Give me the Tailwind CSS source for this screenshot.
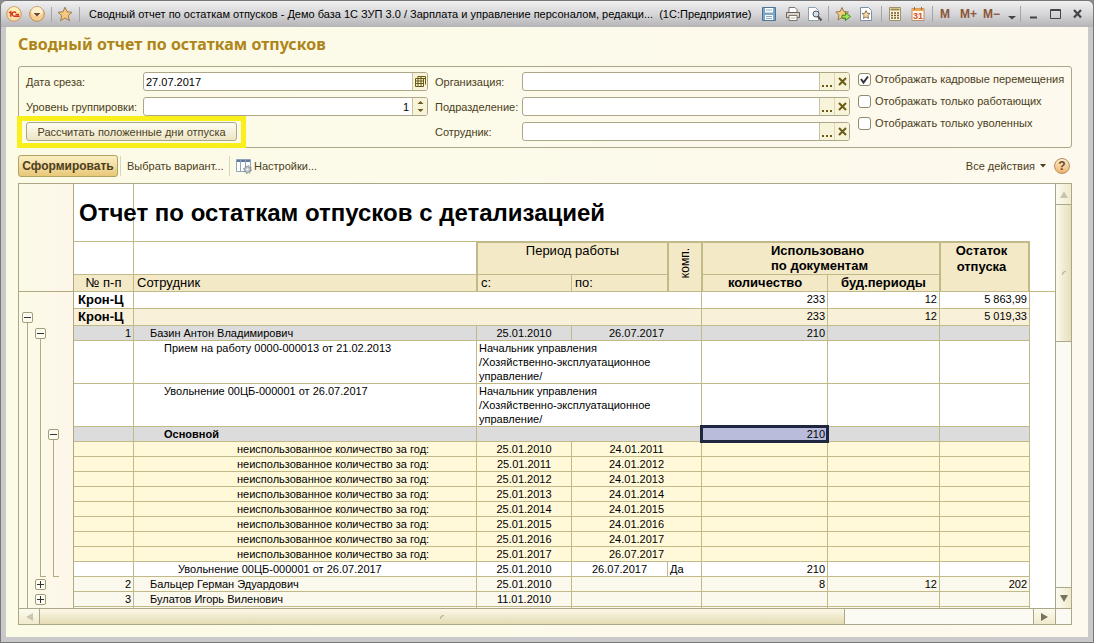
<!DOCTYPE html>
<html lang="ru">
<head>
<meta charset="utf-8">
<title>Сводный отчет по остаткам отпусков</title>
<script src="https://cdn.jsdelivr.net/npm/@tailwindcss/browser@4"></script>
</head>
<body class="h-screen overflow-hidden bg-[#8a8a8c] font-['Liberation_Sans',Arial,sans-serif] text-[11px] leading-[14px] text-[#4b4020]">
<div class="flex h-full flex-col rounded-t-md border border-[#77777a] bg-[#c9c8ca] px-[5px] pb-[5px]">

  <header class="-mx-[5px] flex h-[26px] shrink-0 items-center rounded-t-md bg-linear-to-b from-[#f0f0f1] via-[#d6d6d8] to-[#b4b4b6] pr-[11px] pl-[5px] text-black">
    <button aria-label="Главное меню" class="size-4"><svg viewBox="0 0 16 16" class="size-4"><circle cx="8" cy="8" r="7.300" fill="#fbd9a0" stroke="#c99a62"/><circle cx="8" cy="6.500" r="5.500" fill="#fff0b8"/><path d="M3 7 4.800 5.700V10.800M10 6.900A2.100 2.100 0 1 0 8.500 10.200H13.500M9.500 8.500H13" fill="none" stroke="#d8301c" stroke-width="1.400"/></svg></button>
    <button aria-label="Меню функций" class="ml-[7px] size-4"><svg viewBox="0 0 16 16" class="size-4"><circle cx="8" cy="8" r="7.300" fill="#f8cf92" stroke="#b98d58"/><ellipse cx="8" cy="5.500" rx="5.800" ry="4.500" fill="#fff1d0"/><path d="M4.500 7h7L8 10.500z" fill="#6b4a28"/></svg></button>
    <span class="ml-[6px] h-[15px] w-px bg-[#a5a5a8]"></span>
    <button aria-label="Избранное" class="ml-[5px] size-4"><svg viewBox="0 0 16 16" class="size-4"><path d="m8 1.200 2 4.600 5 .5-3.800 3.300 1.200 5L8 12l-4.400 2.600 1.200-5L1 6.300l5-.5z" fill="#f8c97c" stroke="#a07a50"/></svg></button>
    <span class="ml-[6px] h-[15px] w-px bg-[#a5a5a8]"></span>
    <h1 class="ml-[9px] min-w-0 flex-1 truncate text-[11px] whitespace-pre">Сводный отчет по остаткам отпусков - Демо база 1С ЗУП 3.0 / Зарплата и управление персоналом, редакци...  (1С:Предприятие)</h1>
    <div class="flex items-center">
      <button aria-label="Сохранить" class="size-4"><svg viewBox="0 0 16 16" class="size-4"><path d="M1.500 1.500h13v13h-13z" fill="#7da7c8" stroke="#4a7596"/><path d="M4 2h8v4.500H4zM4 9h8v5H4z" fill="#fff"/><path d="M5 10.500h6M5 12.500h6M5 4h6" stroke="#8aa9c0"/></svg></button>
      <button aria-label="Печать" class="ml-2 size-4"><svg viewBox="0 0 16 16" class="size-4"><path d="M4 6V1.500h6l2 2V6" fill="#fff" stroke="#777"/><path d="M1.500 6.500h13v5h-13z" fill="#ddd5c8" stroke="#6a625a"/><path d="M4 9.500h8v5H4z" fill="#fff" stroke="#777"/><path d="M5.500 12h5" stroke="#bb8"/></svg></button>
      <button aria-label="Предварительный просмотр" class="ml-[6px] size-4"><svg viewBox="0 0 16 16" class="size-4"><path d="M1.500 1.500h7l3 3v10h-10z" fill="#fff" stroke="#8fa0ae"/><circle cx="9" cy="8" r="3" fill="#cde0ee" stroke="#555"/><path d="m11 10.500 3.500 4" stroke="#555" stroke-width="2"/></svg></button>
      <span class="ml-[5px] h-4 w-px bg-[#a5a5a8]"></span>
      <button aria-label="Добавить в избранное" class="ml-[6px] size-4"><svg viewBox="0 0 16 16" class="size-4"><path d="m7 1.500 1.800 4 4.700.5L10 9.200l1 4.800-4-2.400L3 14l1-4.800L.8 6l4.400-.5z" fill="#f7cb82" stroke="#9b774d"/><path d="M7 9.200h3.500V6.500l5 4-5 4V12H7z" fill="#a5e05a" stroke="#3c8a1e"/></svg></button>
      <button aria-label="Список избранного" class="ml-[7px] size-4"><svg viewBox="0 0 16 16" class="size-4"><path d="M2.500 1.500h8l3 3v10h-11z" fill="#fff" stroke="#7992a6"/><path d="m8 4.500 1.200 2.700 2.800.3-2.100 2 .7 2.900L8 11l-2.600 1.400.7-2.900-2.100-2 2.800-.3z" fill="#f7dca8" stroke="#7a6040" stroke-width=".8"/></svg></button>
      <span class="ml-[7px] h-4 w-px bg-[#a5a5a8]"></span>
      <button aria-label="Калькулятор" class="ml-[5px] size-4"><svg viewBox="0 0 16 16" class="size-4"><path d="M2.500 1.500h11v13h-11z" fill="#fbf3dc" stroke="#a09070"/><path d="M3.500 3.500h9" stroke="#a28a40" stroke-width="2"/><path d="M4 7h8M4 9.500h8M4 12h8" stroke="#735c28" stroke-width="1.500" stroke-dasharray="2 1"/></svg></button>
      <button aria-label="Календарь" class="ml-[7px] size-4"><svg viewBox="0 0 16 16" class="size-4"><path d="M2 2.500h12v12H2z" fill="#fff8ea" stroke="#b4926e"/><path d="M2 2.500h12V5H2z" fill="#f0a555"/><path d="M4.500 1v3M11.500 1v3" stroke="#9a6a3a"/><text x="8" y="13" text-anchor="middle" font-size="9" font-weight="700" fill="#d8502c">31</text></svg></button>
      <span class="ml-[6px] h-4 w-px bg-[#a5a5a8]"></span>
      <button class="ml-[7px] text-[12px] font-bold text-[#8a5638]">M</button>
      <button class="ml-[10px] text-[12px] font-bold text-[#8a5638]">M+</button>
      <button class="ml-[6px] text-[12px] font-bold text-[#8a5638]">M−</button>
      <button aria-label="Ещё" class="ml-2 h-4 w-2"><svg viewBox="0 0 8 16" class="h-4 w-2"><path d="M0 10h8l-4 3.500z" fill="#444"/></svg></button>
      <span class="ml-[4px] h-4 w-px bg-[#a5a5a8]"></span>
      <button aria-label="Свернуть" class="ml-[9px] h-3 w-[7px]"><svg viewBox="0 0 7 12" class="h-3 w-[7px]"><path d="M0 9.500h7" stroke="#444" stroke-width="2"/></svg></button>
      <button aria-label="Развернуть" class="ml-[13px] h-3 w-[11px]"><svg viewBox="0 0 11 12" class="h-3 w-[11px]"><path d="M.5 1.500h10v9H.5zM0 2.500h11" fill="none" stroke="#444"/></svg></button>
      <button aria-label="Закрыть" class="ml-[12px] h-3 w-[9px]"><svg viewBox="0 0 9 12" class="h-3 w-[9px]"><path d="m1 2 7 7.500M8 2 1 9.500" stroke="#444" stroke-width="2.200"/></svg></button>
    </div>
  </header>

  <main class="flex min-h-0 flex-1 flex-col bg-linear-to-r from-[#fcfbe6] to-[#fdf9ee] pr-4 pb-3 pl-3">
    <h2 class="mt-2 h-[31px] shrink-0 font-['Noto_Sans',sans-serif] text-[16px] leading-[18px] font-bold text-[#ae8519]">Сводный отчет по остаткам отпусков</h2>

    <form class="flex h-[82px] shrink-0 rounded-[3px] border border-[#aca789] pt-[5px] pr-[7px] pl-[7px]">
      <div class="flex flex-[402] flex-col gap-[6px]">
        <div class="flex h-[19px] items-center">
          <label for="date" class="w-[117px] shrink-0">Дата среза:</label>
          <div class="flex h-full min-w-0 flex-1 overflow-hidden rounded-[3px] border border-[#aca789] bg-white">
            <input id="date" value="27.07.2017" class="min-w-0 flex-1 px-[2px] text-black outline-none">
            <button type="button" aria-label="Выбрать дату" class="flex w-[15px] items-center justify-center border-l border-[#c9c3a0] bg-[#f8f4da]"><svg viewBox="0 0 11 11" class="size-[11px]"><path d="M2.500.5h8v8M2 2.500h8M.5 2.500h8v8h-8zM.5 5h8M.5 7.500h8M3 1v9.500M6 1v9.500" fill="none" stroke="#6b5a14"/></svg></button>
          </div>
        </div>
        <div class="flex h-[19px] items-center">
          <label for="level" class="w-[117px] shrink-0 whitespace-nowrap">Уровень группировки:</label>
          <div class="flex h-full min-w-0 flex-1 overflow-hidden rounded-[3px] border border-[#aca789] bg-white">
            <input id="level" value="1" class="min-w-0 flex-1 px-[3px] text-right text-black outline-none">
            <button type="button" aria-label="Изменить уровень" class="flex w-[15px] items-center justify-center border-l border-[#c9c3a0] bg-[#f8f4da]"><svg viewBox="0 0 7 13" class="h-[13px] w-[7px]"><path d="M.5 4h6l-3-3zM.5 9h6l-3 3z" fill="#6b5a14"/></svg></button>
          </div>
        </div>
        <div class="relative h-[19px] w-[211px]">
          <button type="button" class="h-[19px] w-full rounded-[3px] border border-[#aca789] bg-linear-to-b from-[#fdfcf2] to-[#ece5c4]">Рассчитать положенные дни отпуска</button>
          <span class="pointer-events-none absolute -top-[6px] -right-[9px] -bottom-[7px] -left-[9px] border-[5px] border-[#f9ef1a]"></span>
        </div>
      </div>
      <div class="ml-[7px] flex flex-[415] flex-col gap-[6px]">
        <div class="flex h-[19px] items-center">
          <label for="org" class="w-[87px] shrink-0">Организация:</label>
          <div class="flex h-full min-w-0 flex-1 overflow-hidden rounded-[3px] border border-[#aca789] bg-white">
            <input id="org" class="min-w-0 flex-1 px-[2px] text-black outline-none">
            <button type="button" aria-label="Выбрать" class="flex w-[15px] items-center justify-center border-l border-[#c9c3a0] bg-[#f8f4da]"><svg viewBox="0 0 10 12" class="h-3 w-[10px]"><path d="M0 9h2v2H0zM4 9h2v2H4zM8 9h2v2H8z" fill="#6b5a14"/></svg></button>
            <button type="button" aria-label="Очистить" class="flex w-[15px] items-center justify-center border-l border-[#dcd7b8] bg-[#f8f4da]"><svg viewBox="0 0 9 9" class="size-[9px]"><path d="m1 1 7 7M8 1 1 8" stroke="#6b5a14" stroke-width="2"/></svg></button>
          </div>
        </div>
        <div class="flex h-[19px] items-center">
          <label for="dept" class="w-[87px] shrink-0">Подразделение:</label>
          <div class="flex h-full min-w-0 flex-1 overflow-hidden rounded-[3px] border border-[#aca789] bg-white">
            <input id="dept" class="min-w-0 flex-1 px-[2px] text-black outline-none">
            <button type="button" aria-label="Выбрать" class="flex w-[15px] items-center justify-center border-l border-[#c9c3a0] bg-[#f8f4da]"><svg viewBox="0 0 10 12" class="h-3 w-[10px]"><path d="M0 9h2v2H0zM4 9h2v2H4zM8 9h2v2H8z" fill="#6b5a14"/></svg></button>
            <button type="button" aria-label="Очистить" class="flex w-[15px] items-center justify-center border-l border-[#dcd7b8] bg-[#f8f4da]"><svg viewBox="0 0 9 9" class="size-[9px]"><path d="m1 1 7 7M8 1 1 8" stroke="#6b5a14" stroke-width="2"/></svg></button>
          </div>
        </div>
        <div class="flex h-[19px] items-center">
          <label for="emp" class="w-[87px] shrink-0">Сотрудник:</label>
          <div class="flex h-full min-w-0 flex-1 overflow-hidden rounded-[3px] border border-[#aca789] bg-white">
            <input id="emp" class="min-w-0 flex-1 px-[2px] text-black outline-none">
            <button type="button" aria-label="Выбрать" class="flex w-[15px] items-center justify-center border-l border-[#c9c3a0] bg-[#f8f4da]"><svg viewBox="0 0 10 12" class="h-3 w-[10px]"><path d="M0 9h2v2H0zM4 9h2v2H4zM8 9h2v2H8z" fill="#6b5a14"/></svg></button>
            <button type="button" aria-label="Очистить" class="flex w-[15px] items-center justify-center border-l border-[#dcd7b8] bg-[#f8f4da]"><svg viewBox="0 0 9 9" class="size-[9px]"><path d="m1 1 7 7M8 1 1 8" stroke="#6b5a14" stroke-width="2"/></svg></button>
          </div>
        </div>
      </div>
      <div class="ml-2 flex w-[206px] shrink-0 flex-col gap-2 whitespace-nowrap">
        <label class="flex h-[14px] items-center gap-1"><span class="relative flex"><input type="checkbox" checked class="peer size-[13px] appearance-none rounded-[3px] border border-[#8f8a6c] bg-white"><svg viewBox="0 0 13 13" class="pointer-events-none absolute inset-0 hidden size-[13px] peer-checked:block"><path d="m3 6 2.500 3.500L10 3.500" fill="none" stroke="#333" stroke-width="2"/></svg></span>Отображать кадровые перемещения</label>
        <label class="flex h-[14px] items-center gap-1"><input type="checkbox" class="size-[13px] appearance-none rounded-[3px] border border-[#8f8a6c] bg-white">Отображать только работающих</label>
        <label class="flex h-[14px] items-center gap-1"><input type="checkbox" class="size-[13px] appearance-none rounded-[3px] border border-[#8f8a6c] bg-white">Отображать только уволенных</label>
      </div>
    </form>

    <nav class="mt-[7px] flex h-[22px] shrink-0 items-center">
      <button class="h-[22px] w-[100px] rounded-[3px] border border-[#b3a15f] bg-linear-to-b from-[#fcefc4] to-[#e8c878] text-[12px] font-bold">Сформировать</button>
      <span class="ml-[2px] h-5 w-px bg-[#d9d5bb]"></span>
      <button class="ml-[6px] w-[97px] text-left whitespace-nowrap">Выбрать вариант...</button>
      <span class="ml-[5px] h-5 w-px bg-[#d9d5bb]"></span>
      <button class="ml-[6px] flex items-center gap-[2px]"><svg viewBox="0 0 16 16" class="size-4"><path d="M.5 1.500h14v12H.5z" fill="#fff" stroke="#8fa3bd"/><path d="M1 3h13" stroke="#5f7a9d" stroke-width="2"/><path d="M4.500 2v11M9.500 2v11" stroke="#8fa3bd"/><circle cx="11.500" cy="11.500" r="3" fill="#c4c8cc" stroke="#8a8f94"/><circle cx="11.500" cy="11.500" r="4" fill="none" stroke="#8a8f94" stroke-dasharray="1.500 1.600"/><circle cx="11.500" cy="11.500" r="1" fill="#fff"/></svg>Настройки...</button>
      <button class="ml-auto flex items-center gap-[5px]">Все действия<svg viewBox="0 0 6 4" class="h-1 w-[6px]"><path d="M0 0h6L3 3.500z" fill="#4b4020"/></svg></button>
      <button aria-label="Справка" class="mr-[2px] ml-[8px] flex size-4 items-center justify-center rounded-full border border-[#b78d5c] bg-linear-to-b from-[#fdebcf] to-[#efb56c] text-[12px] font-bold text-[#6d4a26]">?</button>
    </nav>

    <section class="mt-[6px] flex min-h-0 flex-1 flex-col border border-[#aca789]">
      <div class="flex min-h-0 flex-1 overflow-hidden bg-white">
        <!-- grouping tree -->
        <div class="flex w-[55px] shrink-0 flex-col border-r border-[#b3ab80] bg-linear-to-r from-[#fcfbe6] to-[#fdf6ea]">
          <div class="h-[108px] shrink-0 border-b border-[#b3ab80]"></div>
          <div class="flex min-h-0 flex-1 gap-[2px] pl-[3px]">
            <div class="flex w-[11px] flex-col items-center pt-5">
              <button aria-label="Свернуть" class="flex size-[11px] shrink-0 items-center justify-center rounded-[2px] border border-[#a39d7c] bg-[#fdfcf0]"><span class="h-px w-[7px] bg-[#333]"></span></button>
              <span class="w-px flex-1 bg-[#b3ab80]"></span>
            </div>
            <div class="flex w-[11px] flex-col items-center pt-9">
              <button aria-label="Свернуть" class="flex size-[11px] shrink-0 items-center justify-center rounded-[2px] border border-[#a39d7c] bg-[#fdfcf0]"><span class="h-px w-[7px] bg-[#333]"></span></button>
              <span class="ml-[5px] h-[238px] w-[6px] shrink-0 border-b border-l border-[#b3ab80]"></span>
              <button aria-label="Развернуть" class="mt-[2px] flex size-[11px] shrink-0 items-center justify-center rounded-[2px] border border-[#a39d7c] bg-[#fdfcf0]"><svg viewBox="0 0 7 7" class="size-[7px]"><path d="M0 3.500h7M3.500 0v7" stroke="#333"/></svg></button>
              <button aria-label="Развернуть" class="mt-[4px] flex size-[11px] shrink-0 items-center justify-center rounded-[2px] border border-[#a39d7c] bg-[#fdfcf0]"><svg viewBox="0 0 7 7" class="size-[7px]"><path d="M0 3.500h7M3.500 0v7" stroke="#333"/></svg></button>
            </div>
            <div class="flex w-[11px] flex-col items-center pt-[137px]">
              <button aria-label="Свернуть" class="flex size-[11px] shrink-0 items-center justify-center rounded-[2px] border border-[#a39d7c] bg-[#fdfcf0]"><span class="h-px w-[7px] bg-[#333]"></span></button>
              <span class="ml-[5px] h-[137px] w-[6px] shrink-0 border-b border-l border-[#b3ab80]"></span>
            </div>
          </div>
        </div>

        <div class="min-w-0 flex-1 overflow-hidden">
        <table class="w-full table-fixed border-separate border-spacing-0 text-black [&_td]:border-[#c2b988] [&_td]:p-0 [&_th]:border-[#c2b988] [&_th]:p-0 [&_th]:font-normal [&_tbody_td]:border-b [&_tbody_td]:align-top">
          <colgroup><col class="w-[60px]"><col class="w-[343px]"><col class="w-[95px]"><col class="w-[96px]"><col class="w-[34px]"><col class="w-[126px]"><col class="w-[112px]"><col class="w-[90px]"><col></colgroup>
          <thead class="text-[13px] leading-4">
            <tr class="h-[58px]">
              <td class="border-r border-b whitespace-nowrap"><span class="block w-0 pl-[5px] text-[24px] leading-7 font-bold">Отчет по остаткам отпусков с детализацией</span></td>
              <td colspan="7" class="border-b"></td><td></td>
            </tr>
            <tr class="h-[33px]">
              <td class="border-r border-b"></td>
              <td class="border-r border-b"></td>
              <th colspan="2" class="border-t border-r border-b border-l bg-[#f3e9c6] align-top">Период работы</th>
              <th rowspan="2" class="border-t border-r border-b border-l bg-[#f3e9c6] align-top"><span class="inline-block rotate-180 pb-[5px] text-[12px] [writing-mode:vertical-rl]">комп.</span></th>
              <th colspan="2" class="border-t border-r border-b border-l bg-[#f3e9c6] align-top"><b class="block pl-[68px] text-left leading-[15px]">Использовано<br>по документам</b></th>
              <th rowspan="2" class="border-t border-r-2 border-b border-l bg-[#f3e9c6] pr-[6px]! align-top"><b>Остаток<br>отпуска</b></th>
              <td></td>
            </tr>
            <tr class="h-[17px] bg-[#f3e9c6]">
              <th class="border-r border-b">№ п-п</th>
              <th class="border-r border-b text-left"><span class="pl-[3px]">Сотрудник</span></th>
              <th class="border-r border-b border-l text-left"><span class="pl-[3px]">с:</span></th>
              <th class="border-r border-b text-left"><span class="pl-[3px]">по:</span></th>
              <th class="border-r border-b border-l"><b>количество</b></th>
              <th class="border-r border-b"><b>буд.периоды</b></th>
              <td class="border-b bg-white"></td>
            </tr>
          </thead>
          <tbody class="[&_td]:border-r [&_td:last-child]:border-0">
            <tr class="h-[17px]"><td><b class="pl-[4px] text-[13px] leading-4">Крон-Ц</b></td><td colspan="4"></td><td class="text-right"><span class="pr-[2px]">233</span></td><td class="text-right"><span class="pr-[2px]">12</span></td><td class="text-right"><span class="pr-[2px]">5 863,99</span></td><td></td></tr>
            <tr class="h-[17px] bg-[#f9f0d9]"><td><b class="pl-[4px] text-[13px] leading-4">Крон-Ц</b></td><td colspan="4"></td><td class="text-right"><span class="pr-[2px]">233</span></td><td class="text-right"><span class="pr-[2px]">12</span></td><td class="text-right"><span class="pr-[2px]">5 019,33</span></td><td class="bg-white"></td></tr>
            <tr class="h-[15px] bg-[#dcdcdd]"><td class="text-right"><span class="pr-[2px]">1</span></td><td><span class="pl-4">Базин Антон Владимирович</span></td><td class="text-center">25.01.2010</td><td colspan="2" class="text-center">26.07.2017</td><td class="text-right"><span class="pr-[2px]">210</span></td><td></td><td></td><td class="bg-white"></td></tr>
            <tr class="h-[43px]"><td></td><td><span class="pl-[30px]">Прием на работу 0000-000013 от 21.02.2013</span></td><td colspan="3"><p class="pl-[2px]">Начальник управления<br>/Хозяйственно-эксплуатационное<br>управление/</p></td><td></td><td></td><td></td><td></td></tr>
            <tr class="h-[43px]"><td></td><td><span class="pl-[30px]">Увольнение 00ЦБ-000001 от 26.07.2017</span></td><td colspan="3"><p class="pl-[2px]">Начальник управления<br>/Хозяйственно-эксплуатационное<br>управление/</p></td><td></td><td></td><td></td><td></td></tr>
            <tr class="h-[15px] bg-[#dcdcdd]"><td></td><td><b class="pl-[30px]">Основной</b></td><td colspan="3"></td><td class="relative bg-[#b9bddb] text-right"><span class="pr-[2px]">210</span><span class="absolute -top-[2px] -right-[2px] -bottom-[2px] -left-[2px] border-[3px] border-[#1f2740]"></span></td><td></td><td></td><td class="bg-white"></td></tr>
            <tr class="h-[15px] bg-[#fff8d9]"><td></td><td><span class="pl-[103px]">неиспользованное количество за год:</span></td><td class="text-center">25.01.2010</td><td colspan="2" class="text-center">24.01.2011</td><td></td><td></td><td></td><td class="bg-white"></td></tr>
            <tr class="h-[15px] bg-[#fff8d9]"><td></td><td><span class="pl-[103px]">неиспользованное количество за год:</span></td><td class="text-center">25.01.2011</td><td colspan="2" class="text-center">24.01.2012</td><td></td><td></td><td></td><td class="bg-white"></td></tr>
            <tr class="h-[15px] bg-[#fff8d9]"><td></td><td><span class="pl-[103px]">неиспользованное количество за год:</span></td><td class="text-center">25.01.2012</td><td colspan="2" class="text-center">24.01.2013</td><td></td><td></td><td></td><td class="bg-white"></td></tr>
            <tr class="h-[15px] bg-[#fff8d9]"><td></td><td><span class="pl-[103px]">неиспользованное количество за год:</span></td><td class="text-center">25.01.2013</td><td colspan="2" class="text-center">24.01.2014</td><td></td><td></td><td></td><td class="bg-white"></td></tr>
            <tr class="h-[15px] bg-[#fff8d9]"><td></td><td><span class="pl-[103px]">неиспользованное количество за год:</span></td><td class="text-center">25.01.2014</td><td colspan="2" class="text-center">24.01.2015</td><td></td><td></td><td></td><td class="bg-white"></td></tr>
            <tr class="h-[15px] bg-[#fff8d9]"><td></td><td><span class="pl-[103px]">неиспользованное количество за год:</span></td><td class="text-center">25.01.2015</td><td colspan="2" class="text-center">24.01.2016</td><td></td><td></td><td></td><td class="bg-white"></td></tr>
            <tr class="h-[15px] bg-[#fff8d9]"><td></td><td><span class="pl-[103px]">неиспользованное количество за год:</span></td><td class="text-center">25.01.2016</td><td colspan="2" class="text-center">24.01.2017</td><td></td><td></td><td></td><td class="bg-white"></td></tr>
            <tr class="h-[15px] bg-[#fff8d9]"><td></td><td><span class="pl-[103px]">неиспользованное количество за год:</span></td><td class="text-center">25.01.2017</td><td colspan="2" class="text-center">26.07.2017</td><td></td><td></td><td></td><td class="bg-white"></td></tr>
            <tr class="h-[15px]"><td></td><td><span class="pl-11">Увольнение 00ЦБ-000001 от 26.07.2017</span></td><td class="text-center">25.01.2010</td><td class="text-center">26.07.2017</td><td><span class="pl-[2px]">Да</span></td><td class="text-right"><span class="pr-[2px]">210</span></td><td></td><td></td><td></td></tr>
            <tr class="h-[15px] bg-[#fbf8ee]"><td class="text-right"><span class="pr-[2px]">2</span></td><td><span class="pl-4">Бальцер Герман Эдуардович</span></td><td class="text-center">25.01.2010</td><td colspan="2"></td><td class="text-right"><span class="pr-[2px]">8</span></td><td class="text-right"><span class="pr-[2px]">12</span></td><td class="text-right"><span class="pr-[2px]">202</span></td><td class="bg-white"></td></tr>
            <tr class="h-[15px] bg-[#fbf8ee]"><td class="text-right"><span class="pr-[2px]">3</span></td><td><span class="pl-4">Булатов Игорь Виленович</span></td><td class="text-center">11.01.2010</td><td colspan="2"></td><td></td><td></td><td></td><td class="bg-white"></td></tr>
            <tr class="h-[15px] bg-[#fbf8ee]"><td></td><td></td><td></td><td colspan="2"></td><td></td><td></td><td></td><td class="bg-white"></td></tr>
          </tbody>
        </table>
        </div>

        <!-- vertical scrollbar -->
        <div class="flex w-4 shrink-0 flex-col border-l border-[#aca789] bg-[#fbfaf3]">
          <button aria-label="Вверх" class="flex h-[21px] items-center justify-center border-b border-[#aca789] bg-linear-to-r from-[#fbfaee] to-[#f0ebcd]"><svg viewBox="0 0 8 7" class="h-[7px] w-2"><path d="M0 7h8L4 0z" fill="#c9c5ae"/></svg></button>
          <div class="flex h-[137px] items-center justify-center border-b border-[#aca789] bg-linear-to-r from-[#fbfaee] to-[#e6dfb8]"><span class="size-1 rounded-tl-sm border-t border-l border-[#b5af8c]"></span></div>
          <button aria-label="Вниз" class="mt-auto flex h-[21px] items-center justify-center border-t border-[#aca789] bg-linear-to-r from-[#fbfaee] to-[#f0ebcd]"><svg viewBox="0 0 8 7" class="h-[7px] w-2"><path d="M0 0h8L4 7z" fill="#77735e"/></svg></button>
        </div>
      </div>

      <!-- horizontal scrollbar -->
      <div class="flex h-4 shrink-0 border-t border-[#aca789] bg-[#fbfaf3]">
        <button aria-label="Влево" class="flex w-[21px] items-center justify-center border-r border-[#aca789] bg-linear-to-b from-[#fbfaee] to-[#f0ebcd]"><svg viewBox="0 0 7 8" class="h-2 w-[7px]"><path d="M7 0v8L0 4z" fill="#c9c5ae"/></svg></button>
        <div class="flex flex-[806] items-center justify-center border-r border-[#aca789] bg-linear-to-b from-[#fbf8e8] to-[#e4dcb3]"><span class="size-1 rounded-tl-sm border-t border-l border-[#b5af8c]"></span></div>
        <div class="flex-[188]"></div>
        <button aria-label="Вправо" class="flex w-[22px] items-center justify-center border-l border-[#aca789] bg-linear-to-b from-[#fbfaee] to-[#f0ebcd]"><svg viewBox="0 0 7 8" class="h-2 w-[7px]"><path d="M0 0v8l7-4z" fill="#77735e"/></svg></button>
        <span class="w-4 border-l border-[#aca789]"></span>
      </div>
    </section>
  </main>
</div>
</body>
</html>
